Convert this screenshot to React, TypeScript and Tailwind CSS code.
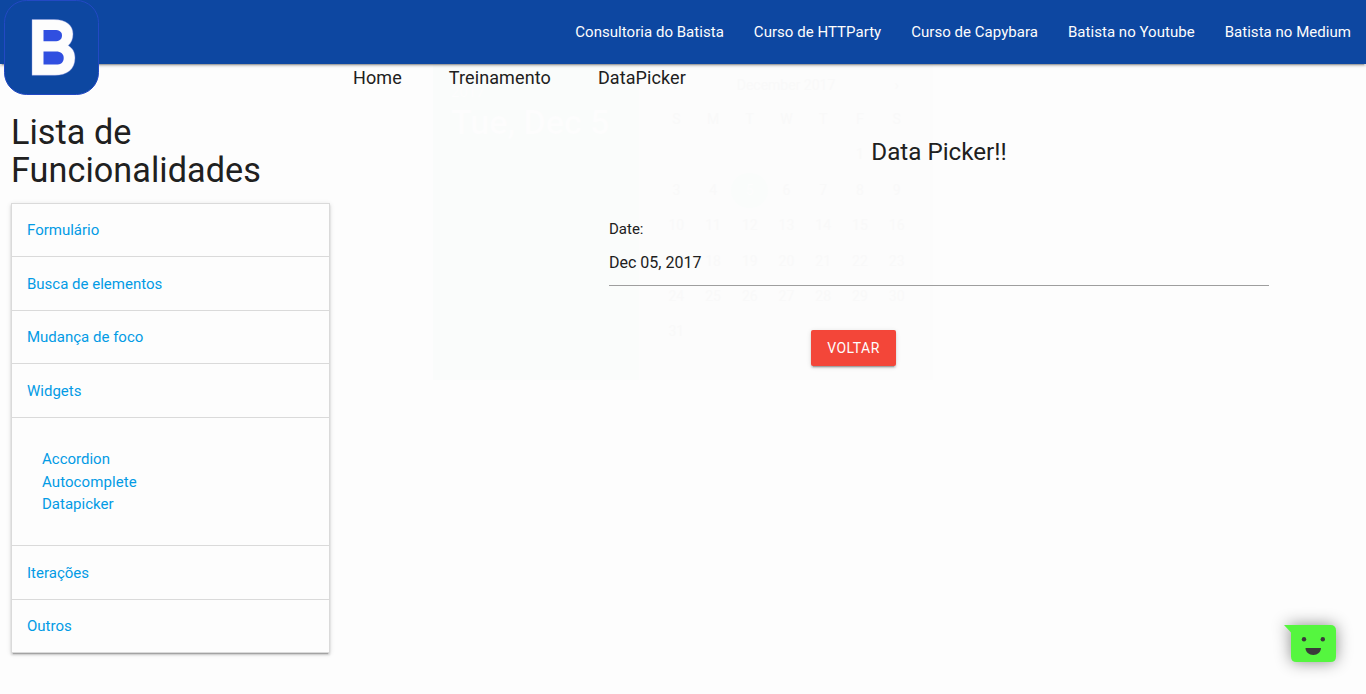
const navLinks = [
  'Consultoria do Batista',
  'Curso de HTTParty',
  'Curso de Capybara',
  'Batista no Youtube',
  'Batista no Medium',
];

const shadow =
  'shadow-[0_2px_2px_0_rgba(0,0,0,0.14),0_1px_5px_0_rgba(0,0,0,0.12),0_3px_1px_-2px_rgba(0,0,0,0.2)]';

const days: string[] = [
  'S', 'M', 'T', 'W', 'T', 'F', 'S',
  '', '', '', '', '', '1', '2',
  ...Array.from({ length: 29 }, (_, i) => String(i + 3)),
];

function Logo() {
  return (
    <svg className="absolute top-0 left-1 h-[95px] w-[95px]" viewBox="0 0 95 95">
      <rect x="0.5" y="0.5" width="94" height="94" rx="22" fill="#0d47a1" stroke="#2349c4" />
      <path
        fill="#fdfdfd"
        stroke="#8a96e4"
        strokeWidth="0.4"
        d="M28 19.5H50C62 19.5 69 25 69 34C69 39 67.5 42.5 64.3 45.5C69 48.5 71 52.5 71 58C71 69.5 63 75.3 51 75.3H28Z"
      />
      <path fill="#304fe0" d="M39.5 30H50.5C55.5 30 58 32 58 35.4C58 39 55.5 41.2 50.5 41.2H39.5Z" />
      <path fill="#304fe0" d="M39.5 51.5H52C57 51.5 59.7 54 59.7 58C59.7 62.3 57 64.6 52 64.6H39.5Z" />
    </svg>
  );
}

function SideItem({ label, last = false, low = false }: { label: string; last?: boolean; low?: boolean }) {
  return (
    <li className={last ? 'p-[15px]' : 'border-b border-[#dadada] p-[15px]'}>
      <a className={low ? 'relative top-px' : ''}>{label}</a>
    </li>
  );
}

function FadingCalendar() {
  return (
    <div
      aria-hidden="true"
      className="pointer-events-none absolute top-[64px] left-[433px] flex h-[316px] w-[500px] bg-[#fcfcfc] text-[#f9f9f9]"
    >
      <div className="w-[206px] bg-[#fafcfb] pt-[17px] pl-[18px] text-[#fdfdfd]">
        <div className="text-[15px] leading-[22px]">2017</div>
        <div className="text-[34px] leading-[38px] font-medium">Tue, Dec 5</div>
      </div>
      <div className="flex flex-1 flex-col pt-[10px]">
        <div className="flex justify-between pr-[34px] pl-[34px] text-[15px] leading-[22px]">
          <span>‹</span>
          <span className="text-[14px]">December 2017</span>
          <span>›</span>
        </div>
        <div className="mt-[6px] ml-[19px] grid w-[257px] grid-cols-7 text-center text-[14px] leading-[35.400px]">
          {days.map((d, i) => (
            <span key={i} className={d === '5' ? 'h-[35.400px] rounded-full bg-[#fafcfb] text-[#fdfdfd]' : 'h-[35.400px]'}>
              {d}
            </span>
          ))}
        </div>
      </div>
    </div>
  );
}

export default function App() {
  return (
    <div className="relative h-[694px] w-[1366px] overflow-hidden bg-[#fdfdfd] font-[Roboto,sans-serif] text-[15px] leading-[22.5px] text-[#202020]">
      <FadingCalendar />

      <header className={`relative flex h-16 justify-end bg-[#0d47a1] text-[#fdfdfd] ${shadow}`}>
        <Logo />
        <nav className="flex">
          {navLinks.map((l) => (
            <a key={l} className="px-[15px] leading-[64px] tracking-[0.035px]">{l}</a>
          ))}
        </nav>
      </header>

      <div className="relative flex">
        <aside className="w-[342px] pt-[50px] pr-3 pl-[11px]">
          <h1 className="text-[34.200px] leading-[37.600px] tracking-[0.060px]">Lista de Funcionalidades</h1>
          <ul className={`mt-[13.800px] border border-[#dadada] text-[#039be5] ${shadow}`}>
            <SideItem label="Formulário" />
            <SideItem label="Busca de elementos" low />
            <SideItem label="Mudança de foco" />
            <SideItem label="Widgets" low />
            <li className="border-b border-[#dadada] p-[30px]">
              <div>Accordion</div>
              <div className="relative top-px tracking-[0.080px]">Autocomplete</div>
              <div>Datapicker</div>
            </li>
            <SideItem label="Iterações" low />
            <SideItem label="Outros" last />
          </ul>
        </aside>

        <main className="flex-1 pl-[11px]">
          <div className="flex gap-[47px] text-[18px] leading-[28px] tracking-[0.100px]">
            <span>Home</span>
            <span>Treinamento</span>
            <span>DataPicker</span>
          </div>
          <h2 className="ml-[256px] w-[660px] pt-[46px] text-center text-[24.200px] leading-[28px]">Data Picker!!</h2>
          <div className="mt-[52px] ml-[256px] w-[660px]">
            <label className="block">Date:</label>
            <div className="h-[45px] border-b border-[#9e9e9e] text-[16px] leading-[44px]">Dec 05, 2017</div>
          </div>
          <button
            className={`mt-[44px] ml-[458px] flex h-9 w-[85px] items-center justify-center rounded-[2px] bg-[#f34639] pt-px text-[14px] tracking-[0.5px] text-[#fdfdfd] ${shadow}`}
          >
            VOLTAR
          </button>
        </main>
      </div>

      <svg
        className="absolute top-[625px] left-[1284px] h-[37px] w-[52px] overflow-visible drop-shadow-[0_0_8px_rgba(0,0,0,0.45)]"
        viewBox="0 0 52 37"
      >
        <path fill="#55f63f" d="M0 0H46.5Q52 0 52 5.5V31.5Q52 37 46.5 37H12.5Q7 37 7 31.5V7.5Z" />
        <circle cx="20" cy="14.3" r="2.2" fill="#3a3a3a" />
        <circle cx="38.8" cy="14.3" r="2.2" fill="#3a3a3a" />
        <path fill="#3a3a3a" d="M21.5 23H37C37 27 33.5 30 29.25 30S21.5 27 21.5 23Z" />
      </svg>
    </div>
  );
}
